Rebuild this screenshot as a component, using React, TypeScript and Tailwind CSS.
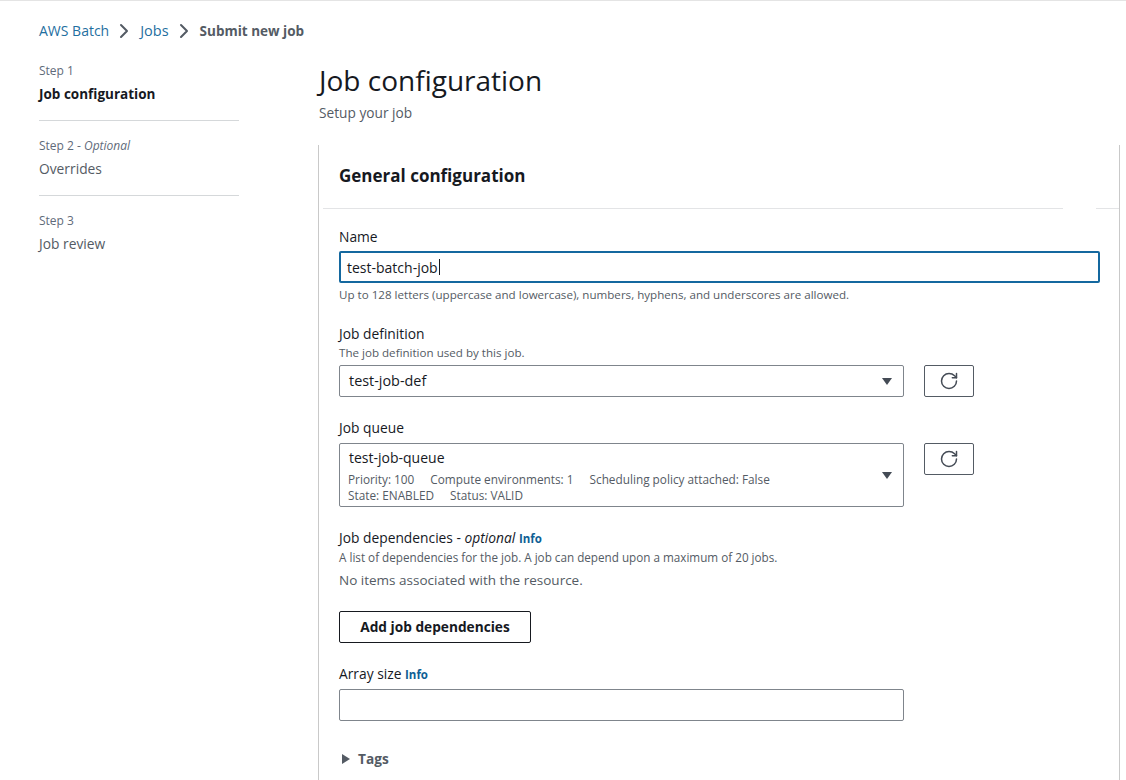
import { ChevronRight, RotateCw } from 'lucide-react';

const font = { fontFamily: '"Open Sans", "Noto Sans", sans-serif' };

function Step({ step, optional, title, active }: { step: string; optional?: boolean; title: string; active?: boolean }) {
  return (
    <div className="flex flex-col">
      <div className="h-[20px] text-[12px] leading-[20px] text-[#5f6b7a]">
        {step}
        {optional && (
          <span>
            {' - '}
            <i>Optional</i>
          </span>
        )}
      </div>
      <div className={`mt-[3px] h-[20px] leading-[20px] ${active ? 'text-[13.5px] font-bold text-[#16191f]' : 'text-[13.8px] text-[#545b64]'}`}>
        {title}
      </div>
    </div>
  );
}

function Label({ children }: { children: React.ReactNode }) {
  return <div className="h-[20px] text-[13.8px] leading-[20px] text-[#16191f]">{children}</div>;
}

function Hint({ children }: { children: React.ReactNode }) {
  return <div className="h-[16px] text-[11.6px] leading-[16px] text-[#545b64]">{children}</div>;
}

function Info() {
  return <span className="text-[11.5px] font-bold text-[#0f5f95]">Info</span>;
}

function Caret() {
  return (
    <svg width="12" height="9" viewBox="0 0 12 9" className="shrink-0">
      <path d="M1 1h10L6 8z" fill="#444b55" />
    </svg>
  );
}

function RefreshButton() {
  return (
    <button className="flex h-[32px] w-[50px] items-center justify-center rounded-[2px] border border-[#545b64] bg-white text-[#444b55]">
      <RotateCw size={20} strokeWidth={1.8} />
    </button>
  );
}

export default function App() {
  return (
    <div className="h-[780px] w-[1126px] overflow-hidden border-t border-[#e4e4e4] bg-white" style={font}>
      <nav className="flex h-[60px] items-center pl-[39px] text-[14px] leading-[20px]">
        <span className="text-[#1f6f9f]">AWS Batch</span>
        <ChevronRight size={24} strokeWidth={2} className="ml-[3px] text-[#545b64]" />
        <span className="ml-[4px] text-[14.5px] text-[#1f6f9f]">Jobs</span>
        <ChevronRight size={24} strokeWidth={2} className="ml-[3px] text-[#545b64]" />
        <span className="ml-[4px] text-[13.5px] font-bold text-[#545b64]">Submit new job</span>
      </nav>

      <div className="flex">
        <aside className="w-[200px] ml-[39px] shrink-0">
          <Step step="Step 1" title="Job configuration" active />
          <div className="mt-[16px] mb-[15px] h-px bg-[#d5d8da]" />
          <Step step="Step 2" optional title="Overrides" />
          <div className="mt-[16px] mb-[15px] h-px bg-[#d5d8da]" />
          <Step step="Step 3" title="Job review" />
        </aside>

        <main className="ml-[79px] w-[802px]">
          <h1 className="-mt-[2px] h-[42px] pl-[1px] text-[28px] leading-[42px] text-[#16191f]">Job configuration</h1>
          <div className="mt-[2px] h-[20px] pl-[1px] text-[13.7px] leading-[20px] text-[#545b64]">Setup your job</div>

          <section className="mt-[22px] h-[640px] border-x border-[#c9c9c9] pt-[17px]">
            <h2 className="ml-[20px] h-[28px] text-[17px] font-bold leading-[28px] text-[#16191f]">General configuration</h2>
            <div className="mt-[18px] ml-[4px] flex">
              <div className="h-px w-[740px] bg-[#e3e4e6]" />
              <div className="ml-[33px] h-px flex-1 bg-[#e3e4e6]" />
            </div>

            <div className="ml-[20px] mt-[18px]">
              <Label>Name</Label>
              <div className="mt-[4px] flex h-[32px] w-[761px] items-center rounded-[2px] border-2 border-[#14689f] pl-[6px] text-[14px] text-[#16191f]">
                test-batch-job
                <span className="ml-[1px] h-[16px] w-px bg-[#16191f]" />
              </div>
              <div className="mt-[4px]">
                <Hint>Up to 128 letters (uppercase and lowercase), numbers, hyphens, and underscores are allowed.</Hint>
              </div>

              <div className="mt-[21px]">
                <Label>Job definition</Label>
              </div>
              <div className="mt-[1px]">
                <Hint>The job definition used by this job.</Hint>
              </div>
              <div className="mt-[4px] flex items-start gap-[20px]">
                <div className="flex h-[32px] w-[565px] items-center justify-between rounded-[2px] border border-[#7f858c] pl-[9px] pr-[10px] text-[14.4px] text-[#16191f]">
                  test-job-def
                  <Caret />
                </div>
                <RefreshButton />
              </div>

              <div className="mt-[21px]">
                <Label>Job queue</Label>
              </div>
              <div className="mt-[5px] flex items-start gap-[20px]">
                <div className="flex h-[64px] w-[565px] items-center justify-between rounded-[2px] border border-[#7f858c] pl-[8px] pr-[10px]">
                  <div className="flex flex-col">
                    <div className="h-[20px] pl-[1px] text-[14px] leading-[20px] text-[#16191f]">test-job-queue</div>
                    <div className="mt-[3px] h-[16px] text-[11.8px] leading-[16px] text-[#545b64]">
                      <span>Priority: 100</span>
                      <span className="ml-[16px]">Compute environments: 1</span>
                      <span className="ml-[16px]">Scheduling policy attached: False</span>
                    </div>
                    <div className="h-[16px] text-[11.8px] leading-[16px] text-[#545b64]">
                      <span>State: ENABLED</span>
                      <span className="ml-[16px]">Status: VALID</span>
                    </div>
                  </div>
                  <Caret />
                </div>
                <RefreshButton />
              </div>

              <div className="mt-[21px]">
                <Label>
                  Job dependencies - <i>optional</i> <Info />
                </Label>
              </div>
              <div className="mt-[1px]">
                <div className="h-[16px] text-[11.7px] leading-[16px] text-[#545b64]">
                  A list of dependencies for the job. A job can depend upon a maximum of 20 jobs.
                </div>
              </div>
              <div className="mt-[5px] h-[20px] text-[13.5px] leading-[20px] text-[#545b64]">No items associated with the resource.</div>

              <button className="mt-[21px] flex h-[32px] w-[192px] items-center justify-center rounded-[2px] border border-[#16191f] text-[13.7px] font-bold text-[#16191f]">
                Add job dependencies
              </button>

              <div className="mt-[21px]">
                <Label>
                  Array size <Info />
                </Label>
              </div>
              <div className="mt-[5px] h-[32px] w-[565px] rounded-[2px] border border-[#7f858c]" />

              <div className="mt-[28px] flex h-[20px] items-center text-[13.7px] font-bold text-[#545b64]">
                <svg width="10" height="12" viewBox="0 0 10 12" className="ml-[2px]">
                  <path d="M1 1l8 5-8 5z" fill="#545b64" />
                </svg>
                <span className="ml-[7px]">Tags</span>
              </div>
            </div>
          </section>
        </main>
      </div>
    </div>
  );
}
